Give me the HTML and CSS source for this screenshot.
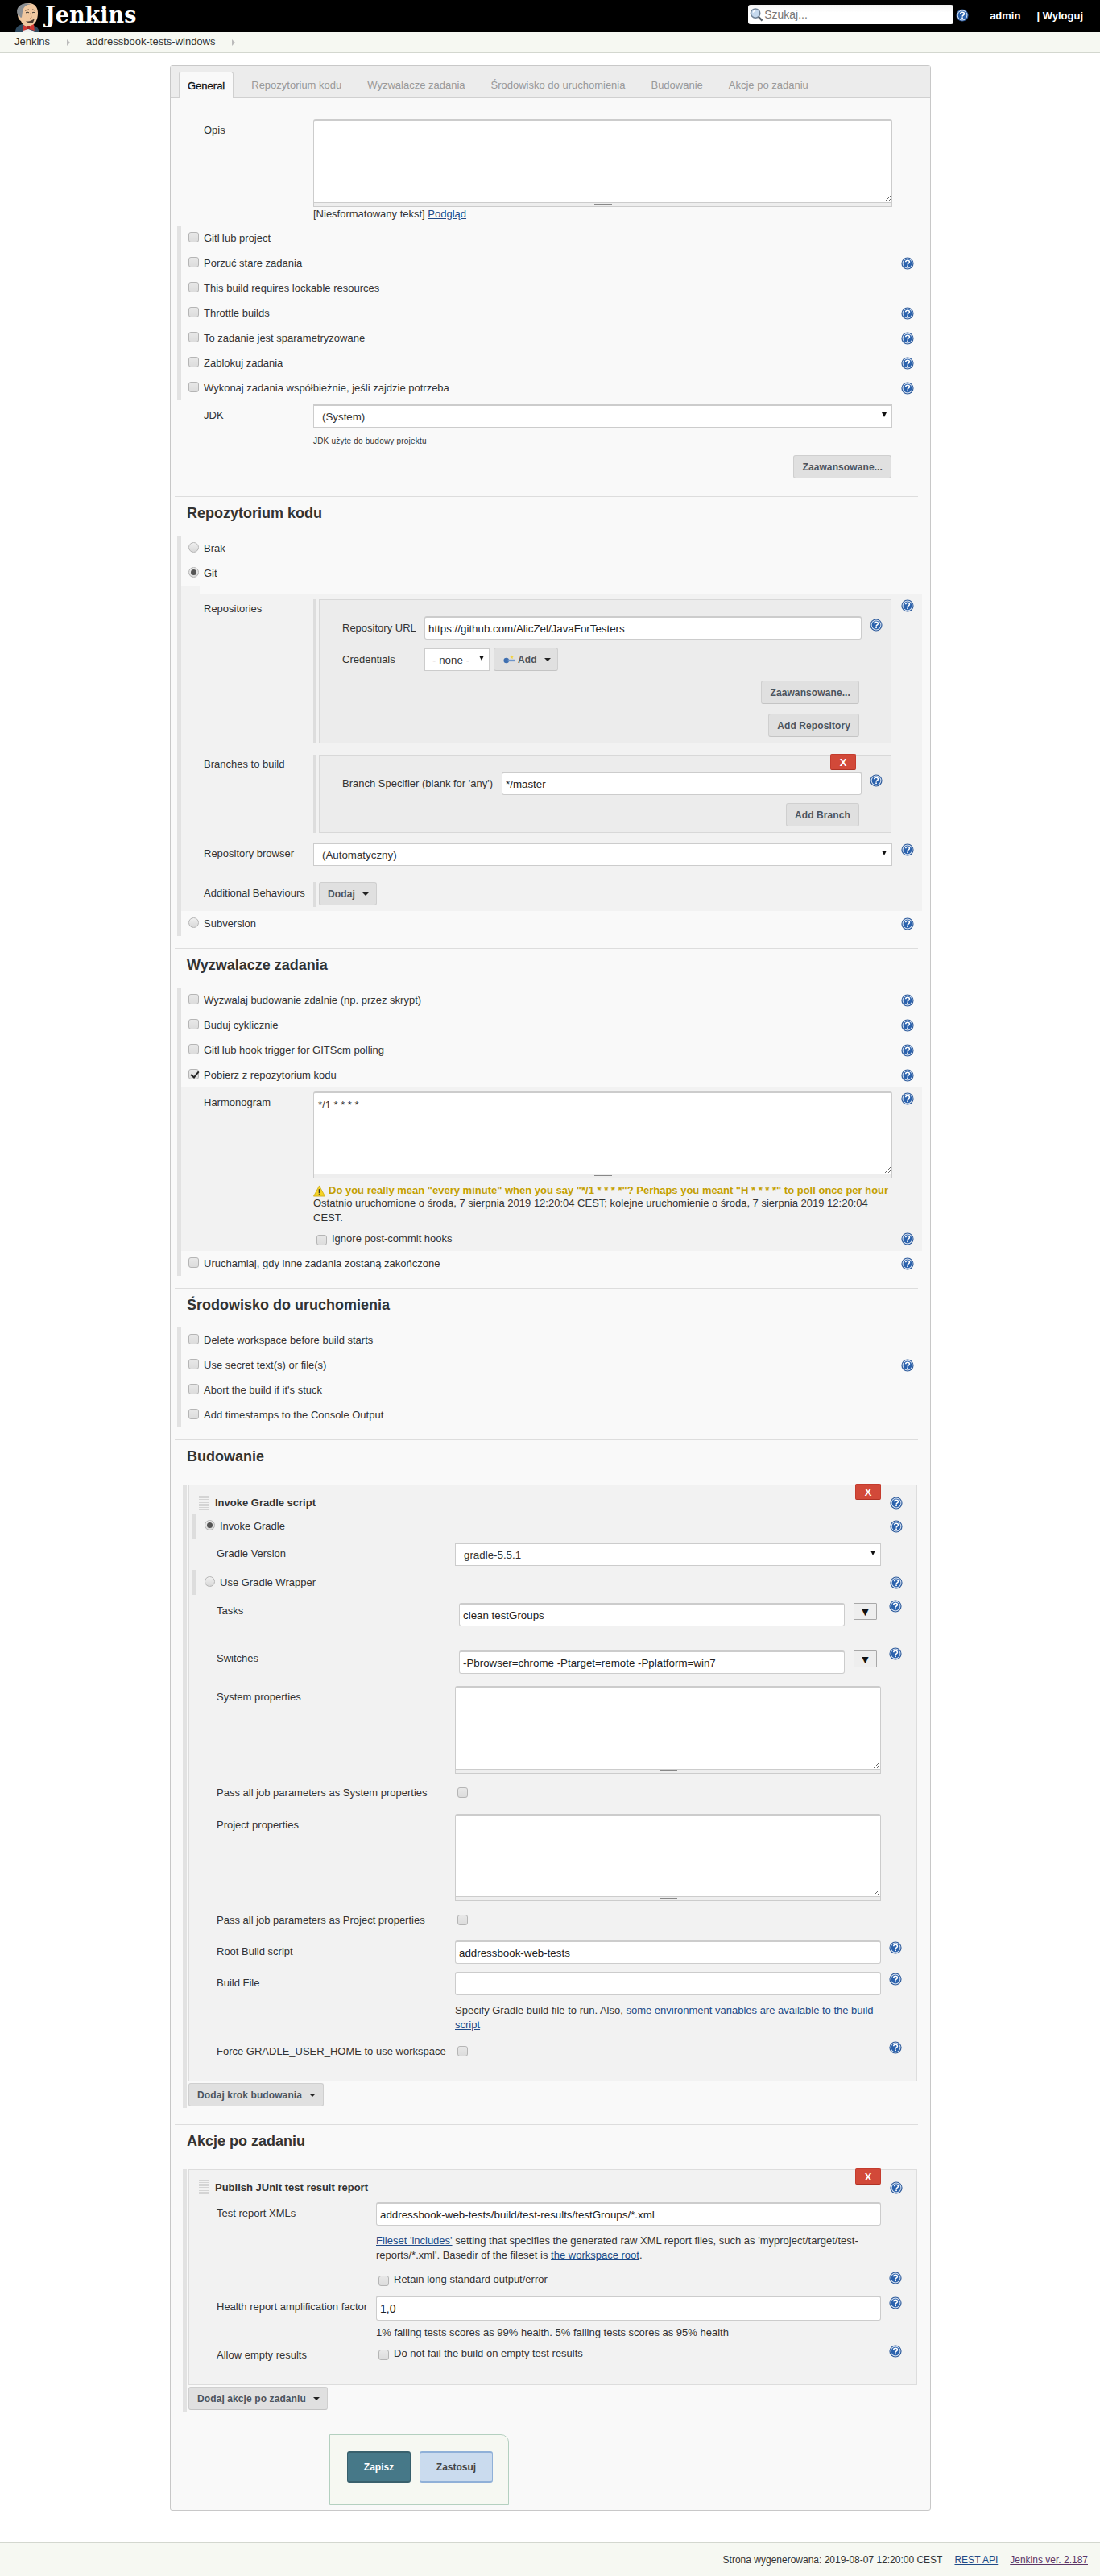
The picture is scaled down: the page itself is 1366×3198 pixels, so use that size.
FILE: index.html
```html
<!DOCTYPE html>
<html lang="pl">
<head>
<meta charset="utf-8">
<title>addressbook-tests-windows Config [Jenkins]</title>
<link rel="stylesheet" href="styles.css">
</head>
<body>
<svg class="defs" width="0" height="0" aria-hidden="true">
  <symbol id="q" viewBox="0 0 16 16">
    <circle cx="8" cy="8" r="7.6" fill="#2f5c9c"/>
    <circle cx="8" cy="8" r="6.4" fill="#dbe6f4"/>
    <circle cx="8" cy="8" r="5.4" fill="#2b62ad"/>
    <path d="M5.7 6.3C5.8 4.9 6.8 4.2 8 4.2c1.4 0 2.4.8 2.4 2 0 1.7-2.2 1.7-2.3 3.4" fill="none" stroke="#fff" stroke-width="1.6"/>
    <rect x="7.2" y="10.4" width="1.7" height="1.7" fill="#fff"/>
  </symbol>
</svg>

<header class="top">
  <svg class="logo" viewBox="0 0 34 36" width="34" height="36" aria-label="Jenkins logo">
    <path d="M2 36c0-6 4-9 9-10l4 2 8-1c5 1 8 4 9 9z" fill="#2f4a5f"/>
    <path d="M5 8C7 2 13 0 19 0c7 0 11 5 11 12 0 8-3 15-10 17-5 1-9-2-11-7-2-1-5-4-4-14z" fill="#f0c8a0"/>
    <path d="M5 14C2 7 7 1 14 .4c3-.2 5 0 7 1-5 0-9 3-10 9l-1 7c-1 1-2 0-2-1-2 0-2-1-3-2z" fill="#8a8f94"/>
    <path d="M14 9l5-1M23 8l4 1" stroke="#3a2a20" stroke-width="1.2" fill="none"/>
    <path d="M15 12c1.500-1 3-1 4 0M23 12c1-.8 2.500-.8 3.500 0" stroke="#222" stroke-width="1" fill="none"/>
    <path d="M21 12l1 6-2 1" stroke="#b98a63" stroke-width="1" fill="none"/>
    <path d="M15 22c3 1 7 0 11-3l-2 5c-3 1-6 1-9-2z" fill="#4a3a30"/>
    <path d="M11 27l7 2.500 7-3.500.8 8-7.800-2.500-7 3.500z" fill="#d33833"/>
    <rect x="16.500" y="28" width="3.500" height="4" fill="#a52522"/>
    <path d="M10 34.500l2 1.500h12l2-1-8-3z" fill="#eee"/>
  </svg>
  <div class="brand">Jenkins</div>
  <div class="search">
    <svg class="lens" viewBox="0 0 18 18" width="17" height="18" aria-hidden="true">
      <circle cx="7.500" cy="7.500" r="6" fill="#c5d9ee" stroke="#6f8296" stroke-width="1.600"/>
      <path d="M4.500 6.500a3.500 3.500 0 0 1 3-2.500" stroke="#fff" stroke-width="1.400" fill="none"/>
      <path d="M11.500 12l5 5" stroke="#59636d" stroke-width="2.600"/>
    </svg>
    <input class="search-input" type="text" placeholder="Szukaj...">
  </div>
  <svg class="help top-help"><use href="#q"/></svg>
  <a class="top-link user">admin</a>
  <a class="top-link logout">| Wyloguj</a>
</header>

<nav class="crumbs">
  <a>Jenkins</a><i class="chev"></i>
  <a>addressbook-tests-windows</a><i class="chev"></i>
</nav>

<main class="panel">
  <div class="tabs">
    <span class="tab active">General</span>
    <span class="tab">Repozytorium kodu</span>
    <span class="tab">Wyzwalacze zadania</span>
    <span class="tab">Środowisko do uruchomienia</span>
    <span class="tab">Budowanie</span>
    <span class="tab">Akcje po zadaniu</span>
  </div>

  <form class="form">
    <div class="fld mt26">
      <label class="lab">Opis</label>
      <div>
        <textarea class="area h104"></textarea>
        <div class="grip"></div>
        <div class="note">[Niesformatowany tekst] <a class="lnk">Podgląd</a></div>
      </div>
    </div>

    <div class="opts mt5">
      <div class="chk"><input class="cb" type="checkbox"><span>GitHub project</span></div>
      <div class="chk"><input class="cb" type="checkbox"><span>Porzuć stare zadania</span><svg class="help end"><use href="#q"/></svg></div>
      <div class="chk"><input class="cb" type="checkbox"><span>This build requires lockable resources</span></div>
      <div class="chk"><input class="cb" type="checkbox"><span>Throttle builds</span><svg class="help end"><use href="#q"/></svg></div>
      <div class="chk"><input class="cb" type="checkbox"><span>To zadanie jest sparametryzowane</span><svg class="help end"><use href="#q"/></svg></div>
      <div class="chk"><input class="cb" type="checkbox"><span>Zablokuj zadania</span><svg class="help end"><use href="#q"/></svg></div>
      <div class="chk"><input class="cb" type="checkbox"><span>Wykonaj zadania współbieżnie, jeśli zajdzie potrzeba</span><svg class="help end"><use href="#q"/></svg></div>
    </div>

    <div class="fld mt5">
      <label class="lab">JDK</label>
      <div class="sel"><select class="select"><option>(System)</option></select></div>
    </div>
    <div class="fld">
      <span></span>
      <div>
        <div class="tiny">JDK użyte do budowy projektu</div>
        <div class="btn-end"><button type="button" class="btn">Zaawansowane...</button></div>
      </div>
    </div>

    <section class="sec">
      <h2 class="head">Repozytorium kodu</h2>
      <div class="opts">
        <div class="chk"><input class="rd" type="radio" name="scm"><span>Brak</span></div>
        <div class="chk"><input class="rd" type="radio" name="scm" checked><span>Git</span></div>
        <div class="sub notch">
          <div class="fld2 pt7">
            <label class="lab2 lab2t">Repositories</label>
            <div class="rep">
              <div class="box">
                <div class="in-row in-first">
                  <label class="lab3 w131">Repository URL</label>
                  <input class="inp grow" type="text" value="https://github.com/AlicZel/JavaForTesters">
                  <svg class="help in-help"><use href="#q"/></svg>
                </div>
                <div class="in-row mt10">
                  <label class="lab3 w131">Credentials</label>
                  <div class="sel narrow"><select class="select none"><option>- none -</option></select></div>
                  <button type="button" class="btn add">
                    <svg class="key" viewBox="0 0 16 14" width="15" height="14" aria-hidden="true">
                      <circle cx="4" cy="8" r="3.500" fill="#3f6fb0"/>
                      <rect x="6" y="6.800" width="9" height="2.500" fill="#6d94c8"/>
                      <path d="M11 1l.8 1.700 1.700.3-1.200 1.200.3 1.800-1.600-.9-1.600.9.300-1.800L9 3l1.700-.3z" fill="#f3d23f"/>
                    </svg>
                    Add<i class="caret"></i>
                  </button>
                </div>
                <div class="btn-end e39 mt12"><button type="button" class="btn">Zaawansowane...</button></div>
                <div class="btn-end e39 mt12 pb7"><button type="button" class="btn">Add Repository</button></div>
              </div>
            </div>
            <svg class="help side s1"><use href="#q"/></svg>
          </div>

          <div class="fld2 mt14">
            <label class="lab2 lab2t">Branches to build</label>
            <div class="rep">
              <div class="box rel">
                <button type="button" class="del d2">X</button>
                <div class="in-row in-first">
                  <label class="lab3 w227">Branch Specifier (blank for 'any')</label>
                  <input class="inp grow" type="text" value="*/master">
                  <svg class="help in-help"><use href="#q"/></svg>
                </div>
                <div class="btn-end e39 mt10 pb7"><button type="button" class="btn">Add Branch</button></div>
              </div>
            </div>
          </div>

          <div class="fld2 mt12">
            <label class="lab2">Repository browser</label>
            <div class="sel"><select class="select"><option>(Automatyczny)</option></select></div>
            <svg class="help side"><use href="#q"/></svg>
          </div>

          <div class="fld2 mt20 pb5">
            <label class="lab2">Additional Behaviours</label>
            <div class="rep"><div class="plain"><button type="button" class="btn drop">Dodaj<i class="caret"></i></button></div></div>
          </div>
        </div>
        <div class="chk"><input class="rd" type="radio" name="scm"><span>Subversion</span><svg class="help end"><use href="#q"/></svg></div>
      </div>
    </section>

    <section class="sec">
      <h2 class="head">Wyzwalacze zadania</h2>
      <div class="opts">
        <div class="chk"><input class="cb" type="checkbox"><span>Wyzwalaj budowanie zdalnie (np. przez skrypt)</span><svg class="help end"><use href="#q"/></svg></div>
        <div class="chk"><input class="cb" type="checkbox"><span>Buduj cyklicznie</span><svg class="help end"><use href="#q"/></svg></div>
        <div class="chk"><input class="cb" type="checkbox"><span>GitHub hook trigger for GITScm polling</span><svg class="help end"><use href="#q"/></svg></div>
        <div class="chk"><input class="cb" type="checkbox" checked><span>Pobierz z repozytorium kodu</span><svg class="help end"><use href="#q"/></svg></div>
        <div class="sub">
          <div class="fld2 pt5">
            <label class="lab2">Harmonogram</label>
            <div>
              <textarea class="area h103">*/1 * * * *</textarea>
              <div class="grip"></div>
              <div class="warn">
                <svg class="tri" viewBox="0 0 16 16" width="15" height="15" aria-hidden="true">
                  <path d="M8 1l7.500 14H.5z" fill="#f5d327" stroke="#c9a50d" stroke-width=".8"/>
                  <rect x="7.200" y="5.500" width="1.700" height="5.500" fill="#333"/>
                  <rect x="7.200" y="12" width="1.700" height="1.700" fill="#333"/>
                </svg>
                Do you really mean "every minute" when you say "*/1 * * * *"? Perhaps you meant "H * * * *" to poll once per hour
              </div>
              <div class="note-block up1">Ostatnio uruchomione o środa, 7 sierpnia 2019 12:20:04 CEST; kolejne uruchomienie o środa, 7 sierpnia 2019 12:20:04 CEST.</div>
            </div>
            <svg class="help side"><use href="#q"/></svg>
          </div>
          <div class="fld2 mt2">
            <span></span>
            <div class="inline-chk"><input class="cb low" type="checkbox"><span>Ignore post-commit hooks</span></div>
            <svg class="help side s2"><use href="#q"/></svg>
          </div>
        </div>
        <div class="chk"><input class="cb" type="checkbox"><span>Uruchamiaj, gdy inne zadania zostaną zakończone</span><svg class="help end"><use href="#q"/></svg></div>
      </div>
    </section>

    <section class="sec">
      <h2 class="head">Środowisko do uruchomienia</h2>
      <div class="opts">
        <div class="chk"><input class="cb" type="checkbox"><span>Delete workspace before build starts</span></div>
        <div class="chk"><input class="cb" type="checkbox"><span>Use secret text(s) or file(s)</span><svg class="help end"><use href="#q"/></svg></div>
        <div class="chk"><input class="cb" type="checkbox"><span>Abort the build if it's stuck</span></div>
        <div class="chk"><input class="cb" type="checkbox"><span>Add timestamps to the Console Output</span></div>
      </div>
    </section>

    <section class="sec">
      <h2 class="head h-build">Budowanie</h2>
      <div class="steps">
        <div class="step">
          <button type="button" class="del">X</button>
          <div class="step-title"><span class="dots"></span><b>Invoke Gradle script</b><svg class="help title-help"><use href="#q"/></svg></div>
          <div class="radio-row"><input class="rd" type="radio" name="g" checked><span>Invoke Gradle</span><svg class="help title-help"><use href="#q"/></svg></div>
          <div class="g1 mt5">
            <label class="lab4">Gradle Version</label>
            <div class="sel"><select class="select s-gr"><option>gradle-5.5.1</option></select></div>
          </div>
          <div class="radio-row mt5"><input class="rd" type="radio" name="g"><span>Use Gradle Wrapper</span><svg class="help title-help"><use href="#q"/></svg></div>
          <div class="g1 mt10">
            <label class="lab4 lab-t">Tasks</label>
            <div class="expand"><input class="inp grow" type="text" value="clean testGroups"><button type="button" class="exp">&#9660;</button></div>
            <svg class="help side3 up4"><use href="#q"/></svg>
          </div>
          <div class="g1 mt30">
            <label class="lab4 lab-t">Switches</label>
            <div class="expand"><input class="inp grow" type="text" value="-Pbrowser=chrome -Ptarget=remote -Pplatform=win7"><button type="button" class="exp">&#9660;</button></div>
            <svg class="help side3 up4"><use href="#q"/></svg>
          </div>
          <div class="g1 mt15">
            <label class="lab4">System properties</label>
            <div><textarea class="area h104"></textarea><div class="grip"></div></div>
          </div>
          <div class="g1 mt9 row30">
            <label class="lab4 lab-c">Pass all job parameters as System properties</label>
            <div class="cb-cell"><input class="cb" type="checkbox"></div>
          </div>
          <div class="g1 mt11">
            <label class="lab4">Project properties</label>
            <div><textarea class="area h103"></textarea><div class="grip"></div></div>
          </div>
          <div class="g1 mt9 row30">
            <label class="lab4 lab-c">Pass all job parameters as Project properties</label>
            <div class="cb-cell"><input class="cb" type="checkbox"></div>
          </div>
          <div class="g1 mt10">
            <label class="lab4">Root Build script</label>
            <input class="inp" type="text" value="addressbook-web-tests">
            <svg class="help side3"><use href="#q"/></svg>
          </div>
          <div class="g1 mt10">
            <label class="lab4">Build File</label>
            <input class="inp" type="text">
            <svg class="help side3"><use href="#q"/></svg>
          </div>
          <div class="g1 mt10">
            <span></span>
            <div class="note-block">Specify Gradle build file to run. Also, <a class="lnk">some environment variables are available to the build script</a></div>
          </div>
          <div class="g1 mt9 row30 pb21">
            <label class="lab4 lab-c">Force GRADLE_USER_HOME to use workspace</label>
            <div class="cb-cell"><input class="cb" type="checkbox"></div>
            <svg class="help side3 down1"><use href="#q"/></svg>
          </div>
        </div>
        <button type="button" class="btn drop after-step">Dodaj krok budowania<i class="caret"></i></button>
      </div>
    </section>

    <section class="sec sec-last">
      <h2 class="head h-build">Akcje po zadaniu</h2>
      <div class="steps">
        <div class="step">
          <button type="button" class="del">X</button>
          <div class="step-title"><span class="dots"></span><b>Publish JUnit test result report</b><svg class="help title-help"><use href="#q"/></svg></div>
          <div class="g2 mt5">
            <label class="lab4">Test report XMLs</label>
            <input class="inp" type="text" value="addressbook-web-tests/build/test-results/testGroups/*.xml">
          </div>
          <div class="g2 mt10">
            <span></span>
            <div class="note-block"><a class="lnk">Fileset 'includes'</a> setting that specifies the generated raw XML report files, such as 'myproject/target/test-reports/*.xml'. Basedir of the fileset is <a class="lnk">the workspace root</a>.</div>
          </div>
          <div class="g2 mt6 row30">
            <span></span>
            <div class="inline-chk i3"><input class="cb low" type="checkbox"><span>Retain long standard output/error</span></div>
            <svg class="help side3 down5"><use href="#q"/></svg>
          </div>
          <div class="g2 mt5">
            <label class="lab4">Health report amplification factor</label>
            <input class="inp tall" type="text" value="1,0">
            <svg class="help side3"><use href="#q"/></svg>
          </div>
          <div class="g2 mt6">
            <span></span>
            <div class="note-block">1% failing tests scores as 99% health. 5% failing tests scores as 95% health</div>
          </div>
          <div class="g2 mt2 row30 pb23">
            <label class="lab4 lab-c2">Allow empty results</label>
            <div class="inline-chk i3"><input class="cb low" type="checkbox"><span>Do not fail the build on empty test results</span></div>
            <svg class="help side3 down4"><use href="#q"/></svg>
          </div>
        </div>
        <button type="button" class="btn drop after-step">Dodaj akcje po zadaniu<i class="caret"></i></button>
      </div>
    </section>

    <div class="sticker">
      <button type="button" class="save">Zapisz</button>
      <button type="button" class="apply">Zastosuj</button>
    </div>
  </form>
</main>

<footer class="foot">
  <span>Strona wygenerowana: 2019-08-07 12:20:00 CEST</span>
  <a class="lnk api">REST API</a>
  <a class="lnk ver">Jenkins ver. 2.187</a>
</footer>
</body>
</html>
```

FILE: styles.css
```css
* { box-sizing: border-box; }
html, body { margin: 0; padding: 0; }
body { font: 13px/16px "Liberation Sans", Arial, sans-serif; color: #333; background: #fff; }
.defs { position: absolute; }
a { color: inherit; }
.lnk { color: #204a87; text-decoration: underline; }
input, select, textarea, button { font-family: "Liberation Sans", Arial, sans-serif; }

/* header */
.top { height: 40px; background: #000; display: flex; align-items: flex-start; }
.logo { margin: 4px 0 0 17px; flex: none; }
.brand { margin: 1px 0 0 5px; font: bold 27px/36px "DejaVu Serif", serif; color: #fff; flex: 1; }
.search { position: relative; width: 255px; height: 24px; margin-top: 6px; }
.lens { position: absolute; left: 2px; top: 3px; }
.search-input { width: 100%; height: 24px; border: 0; border-radius: 3px; padding: 0 4px 0 20px; font-size: 14px; background: linear-gradient(#f1f1f1, #fff 40%); outline: 0; }
.search-input::placeholder { color: #777; opacity: 1; }
.help { width: 16px; height: 16px; display: block; flex: none; }
.top-help { margin: 11px 0 0 3px; }
.top-link { color: #fff; font-weight: bold; margin-top: 12px; }
.user { margin-left: 26px; }
.logout { margin: 12px 21px 0 20px; }

.crumbs { height: 26px; background: #f6f8f2; border-bottom: 1px solid #d3d7cf; display: flex; align-items: center; padding: 0 0 1px 18px; }
.chev { width: 0; height: 0; border-left: 4px solid #bbb; border-top: 4px solid transparent; border-bottom: 4px solid transparent; margin: 1px 20px 0 21px; }

/* panel */
.panel { margin: 15px 0 39px 211px; width: 945px; border: 1px solid #c8c8c8; border-radius: 3px; background: #f9f9f9; padding-bottom: 6px; }
.tabs { height: 40px; background: #ececec; border-bottom: 1px solid #d0d0d0; display: flex; padding: 7px 0 0 10px; position: relative; }
.tab { padding: 9px 16px 0; color: #999; height: 33px; }
.tab.active { padding: 9px 10px 0; margin-right: 6px; color: #111; font-weight: normal; background: #f9f9f9; border: 1px solid #d0d0d0; border-bottom: 0; border-radius: 3px 3px 0 0; height: 33px; -webkit-text-stroke: .3px #111; }
.form { margin-left: 8px; width: 925px; }

/* spacing */
.mt2 { margin-top: 2px; } .mt5 { margin-top: 5px; } .mt6 { margin-top: 6px; } .mt9 { margin-top: 9px; }
.mt10 { margin-top: 10px; } .mt11 { margin-top: 11px; } .mt12 { margin-top: 12px; } .mt14 { margin-top: 14px; }
.mt15 { margin-top: 15px; } .mt20 { margin-top: 20px; } .mt26 { margin-top: 26px; } .mt30 { margin-top: 30px; }
.pt5 { padding-top: 5px; } .pt7 { padding-top: 7px; } .pb5 { padding-bottom: 5px; } .pb7 { padding-bottom: 7px; }

/* fields */
.fld { display: grid; grid-template-columns: 169px 719px 37px; }
.fld2 { display: grid; grid-template-columns: 164px 719px 37px; }
.lab { padding: 6px 0 0 33px; }
.lab2 { padding: 6px 0 0 28px; }
.lab2t { padding-top: 4px; }
.area { display: block; width: 100%; border: 1px solid #ccc; border-top-width: 2px; border-radius: 3px 3px 0 0; background: #fff; padding: 7px 5px; font: 13px/16px "Liberation Sans", sans-serif; color: #333; outline: 0; margin: 0; }
.h104 { height: 104px; } .h103 { height: 103px; }
.grip { height: 5px; background: #eee linear-gradient(#888, #888) center 1px / 22px 1px no-repeat; border: 1px solid #ccc; border-top: 0; position: relative; }
.note { height: 18px; line-height: 18px; }
.note-block { line-height: 18px; }
.up1 { margin-top: -1px; }
.sel { position: relative; height: 29px; }
.sel::after { content: ""; position: absolute; right: 7px; top: 10px; border: 3.500px solid transparent; border-top: 6px solid #111; border-bottom: 0; pointer-events: none; }
.select { appearance: none; -webkit-appearance: none; width: 100%; height: 29px; border: 1px solid #ccc; border-top-width: 2px; border-radius: 0; background: #fff; font-size: 13.330px; padding: 0 0 0 10px; color: #333; outline: 0; }
.side { margin: 1px 0 0 11px; }
.s1 { margin-top: 0; }
.s2 { margin-top: 7px; }
.tiny { font-size: 10px; height: 34px; padding-top: 9px; letter-spacing: .2px; }
.btn-end { display: flex; justify-content: flex-end; padding-right: 1px; }
.e39 { padding-right: 39px; }
.btn { height: 29px; border: 1px solid #cfcfcf; border-bottom-color: #c4c4c4; border-radius: 3px; background: #e0e0e0; color: #4d545d; font: bold 12px "Liberation Sans", sans-serif; letter-spacing: .1px; padding: 0 10px; white-space: nowrap; }
.caret { display: inline-block; width: 0; height: 0; border: 4px solid transparent; border-top: 4px solid #222; border-bottom: 0; margin-left: 9px; vertical-align: middle; }

/* sections */
.sec { margin-top: 22px; }
.sec + .sec { margin-top: 15px; }
.sec + .sec-last { margin-top: 20px; }
.head { margin: 0 5px 0 -3px; border-top: 1px solid #ddd; padding: 8px 0 16px 15px; font: bold 18px/24px "Liberation Sans", sans-serif; color: #333; }
.h-build { padding-bottom: 23px; }
.opts { border-left: 5px solid #e2e2e2; }
.chk { height: 31px; display: flex; align-items: center; padding-left: 9px; }
.cb, .rd { appearance: none; -webkit-appearance: none; width: 13px; height: 13px; margin: 0 6px 3px 0; border: 1px solid #b5b5b5; background: linear-gradient(#e8e8e8, #dcdcdc); flex: none; position: relative; }
.cb { border-radius: 3px; }
.rd { border-radius: 50%; background: linear-gradient(#f0f0f0, #d8d8d8); }
.rd:checked::after { content: ""; position: absolute; left: 2px; top: 2px; width: 7px; height: 7px; border-radius: 50%; background: #555; }
.cb:checked::after { content: ""; position: absolute; left: 3.500px; top: 0; width: 4px; height: 8px; border: solid #222; border-width: 0 2px 2px 0; transform: rotate(40deg); }
.end { margin: 0 10px 0 auto; }
.sub { background: #f2f2f2; position: relative; }
.notch { margin-top: 10px; }
.notch::before { content: ""; position: absolute; left: 0; top: -10px; width: 23px; height: 10px; background: #f2f2f2; }
.rep { display: flex; border-left: 4px solid #ddd; padding-left: 3px; }
.box { flex: 1; margin-right: 1px; background: #ececec; border: 1px solid #d8d8d8; }
.rel { position: relative; }
.plain { height: 31px; }
.in-row { display: flex; align-items: center; padding-right: 10px; }
.in-first { margin-top: 20px; }
.lab3 { padding-left: 28px; flex: none; }
.w131 { width: 130px; }
.w227 { width: 226px; }
.inp { display: block; width: 100%; height: 29px; border: 1px solid #ccc; border-top-width: 2px; border-radius: 3px; background: #fff; font-size: 13.330px; padding: 0 4px; color: #222; outline: 0; min-width: 0; }
.grow { flex: 1; width: auto; }
.tall { height: 31px; font-size: 14px; }
.in-help { margin: -8px 0 0 10px; }
.narrow { width: 81px; }
.none { padding-left: 9px; }
.add { margin-left: 5px; width: 80px; padding: 0 0 0 11px; height: 29px; display: flex; align-items: center; }
.key { margin-right: 3px; }
.del { position: absolute; background: #d24939; color: #fff; border: 1px solid #c43c2e; border-bottom-color: #b03225; border-radius: 2px; font: bold 13px "Liberation Sans", sans-serif; width: 32px; height: 20px; padding: 0; right: 44px; top: -2px; }
.d2 { right: 43px; }
.warn { color: #c4a000; font-weight: bold; height: 23px; padding-top: 6px; white-space: nowrap; display: flex; gap: 4px; align-items: center; margin-top: 0; }
.tri { flex: none; margin-top: 2px; }
.inline-chk { display: flex; align-items: center; height: 30px; padding-left: 4px; }
.i3 { padding-left: 3px; }
.low { margin: 3px 6px 0 0; }

/* build steps */
.steps { border-left: 5px solid #e2e2e2; margin-left: 7px; width: 911px; padding: 0 0 2px 2px; }
.step { position: relative; background: #f2f2f2; border: 1px solid #ddd; width: 905px; }
.step-title { height: 35px; display: flex; align-items: center; padding: 8px 0 0 12px; }
.step-title b { margin-left: 7px; font-weight: bold; }
.dots { width: 13px; height: 17px; background: repeating-linear-gradient(#d4d4d4 0 1px, transparent 1px 2px), #f2f2f2; flex: none; }
.title-help { margin: 0 17px 0 auto; }
.radio-row { height: 31px; border-left: 5px solid #ddd; margin-left: 4px; display: flex; align-items: center; padding-left: 10px; }
.g1 { display: grid; grid-template-columns: 330px 529px 43px; }
.g2 { display: grid; grid-template-columns: 232px 627px 43px; }
.lab4 { padding: 6px 0 0 34px; white-space: nowrap; }
.lab-t { padding-top: 2px; }
.lab-c { padding-top: 7px; }
.lab-c2 { padding-top: 9px; }
.row30 { grid-template-rows: 30px; }
.cb-cell { padding: 8px 0 0 3px; }
.expand { display: flex; padding: 0 5px; align-items: flex-start; }
.exp { width: 29px; height: 21px; margin-left: 11px; padding: 0; font-size: 14px; line-height: 16px; background: #eee; border: 1px solid #a8a8a8; color: #111; border-radius: 1px; flex: none; }
.side3 { margin-left: 10px; margin-top: 1px; }
.up4 { margin-top: -4px; }
.down1 { margin-top: 2px; }
.down4 { margin-top: 4px; }
.down5 { margin-top: 5px; }
.pb21 { padding-bottom: 21px; }
.pb23 { padding-bottom: 23px; }
.after-step { margin: 2px 0 0 0; display: block; }
.drop { padding: 0 9px 0 10px; }

/* bottom bar */
.sticker { margin: 28px 0 0 189px; width: 223px; height: 88px; background: #f6f8f2; border: 1px solid #b4d0c0; border-radius: 0 10px 0 0; padding: 20px 0 0 21px; display: flex; align-items: flex-start; gap: 11px; }
.save, .apply { height: 39px; font: bold 12px "Liberation Sans", sans-serif; border-radius: 3px; }
.save { width: 79px; background: #467888; color: #fff; border: 1px solid #38606d; border-top-width: 2px; border-bottom-width: 2px; }
.apply { width: 91px; background: #cadbee; color: #444; border: 1px solid #8fb0d8; border-top-width: 2px; border-bottom-width: 2px; }

/* footer */
.foot { height: 42px; border-top: 1px solid #d3d7cf; background: #f6f8f2; display: flex; justify-content: flex-end; align-items: center; padding: 0 15px 0 0; gap: 15px; font-size: 12px; }
.ver { color: #5c3566; }
```
